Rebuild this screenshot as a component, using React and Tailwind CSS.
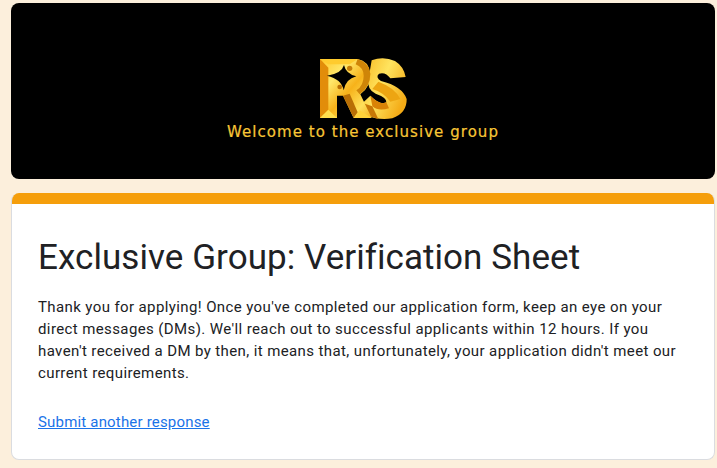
export default function App() {
  return (
    <div className="min-h-[468px] w-[717px] overflow-hidden bg-[#fcefdc] pl-[11px] pr-[2px] pt-[3px] pb-2 [font-family:Roboto,sans-serif]">
      <div className="flex h-[176px] flex-col items-center rounded-lg bg-black pt-[50px]">
        <svg width="95" height="70" viewBox="0 0 285 210" className="ml-[-2px]">
          <defs>
            <linearGradient id="g1" x1="0" y1="0" x2="1" y2="1">
              <stop offset="0" stopColor="#ffc627" />
              <stop offset="0.3" stopColor="#ffe76a" />
              <stop offset="0.55" stopColor="#f7b21a" />
              <stop offset="0.8" stopColor="#ffe05a" />
              <stop offset="1" stopColor="#f5b01c" />
            </linearGradient>
            <linearGradient id="g3" x1="0" y1="0" x2="1" y2="0.6">
              <stop offset="0" stopColor="#f8b71f" />
              <stop offset="0.5" stopColor="#ffe45f" />
              <stop offset="1" stopColor="#f4ab16" />
            </linearGradient>
          </defs>
          <path fill="url(#g3)" d="M170 22 Q205 8 240 24 Q266 40 272 72 L226 76 Q212 56 192 62 Q180 72 198 84 Q262 100 275 138 Q276 180 232 196 Q190 202 160 188 L143 150 L166 128 Q196 158 214 148 Q216 134 182 122 Q156 110 160 80 Z" />
          <path fill="#d98307" d="M166 128 Q196 158 214 148 L222 166 Q190 176 172 160 Z" />
          <path fill="#c87806" d="M143 150 L172 160 L190 198 L160 188 Z" />
          <path fill="#eda512" d="M190 86 Q240 104 256 138 L226 146 Q206 118 172 108 Z" />
          <path fill="url(#g1)" d="M15 18 H128 Q162 24 166 62 Q168 100 136 124 L170 195 H116 L84 128 H66 V195 H15 Z" />
          <path fill="#e28d0a" d="M15 18 L40 44 V170 L15 195 Z" />
          <path fill="#ffdf4e" d="M15 195 L40 170 L66 195 Z" />
          <path fill="#ffcb2e" d="M15 18 H128 L104 34 H40 Z" />
          <path fill="#b96f05" d="M84 128 L116 195 L128 178 L104 122 Z" />
          <path fill="#ffd23a" d="M116 195 L134 172 L170 195 Z" />
          <path fill="#cf8508" d="M122 34 Q146 44 146 68 Q146 98 124 112 L134 124 Q166 100 166 62 Q162 28 128 18 Z" />
          <path fill="#000" d="M87 36 Q92 62 124 70 Q92 78 86 112 Q80 78 36 68 Q80 62 87 36 Z" />
          <circle cx="74" cy="102" r="7" fill="#b96f05" />
          <circle cx="104" cy="46" r="8" fill="#c47c08" />
        </svg>
        <div className="text-[15px] leading-[18px] tracking-[1.05px] text-[#f8c636] [font-family:'DejaVu_Sans',sans-serif] [-webkit-text-stroke:0.2px_#f8c636]">
          Welcome to the exclusive group
        </div>
      </div>
      <div className="mt-[14px] h-[267px] overflow-hidden rounded-lg border border-t-0 border-[#dadce0] bg-white">
        <div className="-mx-px h-[11px] bg-[#f59e0b]" />
        <div className="pl-[26px] pr-[20px] pt-[32px]">
          <h1 className="text-[35px] leading-[44px] tracking-[0.06px] text-[#202124]">Exclusive Group: Verification Sheet</h1>
          <p className="mt-[16px] text-[15px] leading-[22px] tracking-[0.39px] text-[#202124]">
            Thank you for applying! Once you've completed our application form, keep an eye on your direct messages (DMs). We'll reach out to successful applicants within 12 hours. If you haven't received a DM by then, it means that, unfortunately, your application didn't meet our current requirements.
          </p>
          <a href="#" className="mt-[27px] inline-block text-[15px] leading-[22px] tracking-[0.18px] text-[#1a73e8] underline">Submit another response</a>
        </div>
      </div>
    </div>
  );
}
